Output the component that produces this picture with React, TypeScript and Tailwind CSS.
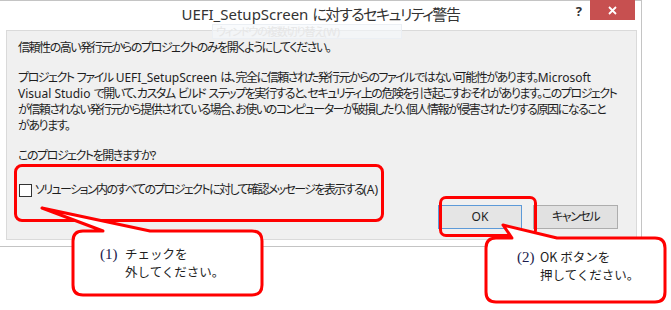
import React from "react";

const uiFont = "font-['Noto_Sans','Noto_Sans_CJK_JP',sans-serif] [font-feature-settings:'palt']";
const noteFont = "font-['Noto_Sans_CJK_JP',sans-serif] [font-feature-settings:normal]";

// latin runs keep their normal spacing, the japanese around them is tightened
function L({ children }: { children: React.ReactNode }) {
  return <span className="tracking-normal">{children}</span>;
}

const Sp = () => <span className="tracking-normal">{"\u00a0"}</span>;

function Callout({
  path,
  children
}: {
  path: string;
  children?: React.ReactNode;
}) {
  return (
    <>
      <svg
        className="pointer-events-none absolute left-0 top-0"
        width={671}
        height={310}
        viewBox="0 0 671 310"
      >
        <path d={path} fill="#ffffff" stroke="#ff0000" strokeWidth={3} strokeLinejoin="round" />
      </svg>
      {children}
    </>
  );
}

export default function App() {
  return (
    <div className={`relative h-[310px] w-[671px] overflow-hidden bg-white text-[#1e1e1e] ${uiFont}`}>
      {/* dialog window */}
      <div className="flex h-[247px] w-[642px] flex-col border-r border-b border-t border-[#c4c4c4] bg-white">
        <div className="relative h-[29px] shrink-0">
          <div className="pt-[3px] text-center text-[15px] leading-[20px] text-[#333333]">
            UEFI_SetupScreen <span className="tracking-[-1.4px]">に対するセキュリティ警告</span>
          </div>
          <span className="absolute right-[59px] top-[1px] text-[13px] font-bold leading-[18px] text-[#333]">?</span>
          <div className="absolute right-[6px] top-[-1px] flex h-[20px] w-[45px] items-center justify-center bg-[#c75050]">
            <svg width="9" height="9" viewBox="0 0 9 9">
              <path d="M1 1 L8 8 M8 1 L1 8" stroke="#ffffff" strokeWidth={1.8} />
            </svg>
          </div>
        </div>

        <div className="ml-[6px] mr-[4px] flex h-[210px] flex-col border border-[#dadada] bg-[#f0f0f0] px-[11px] pt-[9px] text-[12px] leading-[16px] tracking-[-1.45px]">
          <p className="whitespace-nowrap">信頼性の高い発行元からのプロジェクトのみを開くようにしてください。</p>
          <p className="mt-[14px] whitespace-nowrap">
            プロジェクト<Sp />ファイル<Sp /><L>UEFI_SetupScreen</L><Sp />は、完全に信頼された発行元からのファイルではない可能性があります。<L>Microsoft</L>
            <br />
            <L>Visual Studio</L><Sp />で開いて、カスタム<Sp />ビルド<Sp />ステップを実行すると、セキュリティ上の危険を引き起こすおそれがあります。このプロジェクト
            <br />
            が信頼されない発行元から提供されている場合、お使いのコンピューターが破損したり、個人情報が侵害されたりする原因になること
            <br />
            があります。
          </p>
          <p className="mt-[14px] whitespace-nowrap">
            このプロジェクトを開きますか<L>?</L>
          </p>
          <label className="mt-[18px] flex items-center gap-[2px] whitespace-nowrap">
            <span className="ml-[1px] inline-block h-[13px] w-[13px] shrink-0 border border-[#333] bg-white" />
            <span className="ml-[1px] tracking-[-1.6px]">
              ソリューション内のすべてのプロジェクトに対して確認メッセージを表示する<L>(A)</L>
            </span>
          </label>
          <div className="mt-[7px] flex justify-end gap-[11px] pr-[7px]">
            <button className="h-[24px] w-[84px] border border-[#5d9ad8] bg-[#e5e5e5] text-[12px] leading-[20px] tracking-normal">
              OK
            </button>
            <button className="h-[24px] w-[85px] border border-[#adadad] bg-[#e1e1e1] text-[12px] leading-[20px]">
              キャンセル
            </button>
          </div>
        </div>
      </div>

      {/* faint leftover of a menu item behind the dialog */}
      <div className="pointer-events-none absolute left-[212px] top-[24px] flex h-[15px] w-[190px] items-center border border-[#ebeff4] bg-[#f5f8fb]/60 pl-[3px] text-[11px] leading-[13px] tracking-[-1.1px] text-[#e6e6e6]">
        ウィンドウの複数切り替え<L>(W)</L>
      </div>

      {/* red highlights */}
      <div className="absolute left-[14px] top-[164px] h-[58px] w-[370px] rounded-[8px] border-[3px] border-[#ff0000]" />
      <div className="absolute left-[439px] top-[196px] h-[41px] w-[98px] rounded-[7px] border-[3px] border-[#ff0000]" />

      {/* callout 1 */}
      <Callout path="M83 231 L103 231 L42 208 L150 231 L252 231 Q262 231 262 241 L262 285 Q262 295 252 295 L83 295 Q73 295 73 285 L73 241 Q73 231 83 231 Z">
        <div className={`absolute left-[100px] top-[245px] text-[12.5px] leading-[18px] ${noteFont}`}>
          <div className="flex items-baseline">
            <span className="w-[25px] font-['Liberation_Serif',serif] text-[15px] text-[#1b1b4d]">(1)</span>
            <span>チェックを</span>
          </div>
          <div className="pl-[25px]">外してください。</div>
        </div>
      </Callout>

      {/* callout 2 */}
      <Callout path="M496 238 L512 238 L503 225 L557 238 L655 238 Q665 238 665 248 L665 292 Q665 302 655 302 L496 302 Q486 302 486 292 L486 248 Q486 238 496 238 Z">
        <div className={`absolute left-[517px] top-[248px] text-[12.5px] leading-[18px] ${noteFont}`}>
          <div className="flex items-baseline">
            <span className="w-[23px] font-['Liberation_Serif',serif] text-[15px] text-[#1b1b4d]">(2)</span>
            <span>OK ボタンを</span>
          </div>
          <div className="pl-[23px]">押してください。</div>
        </div>
      </Callout>
    </div>
  );
}
